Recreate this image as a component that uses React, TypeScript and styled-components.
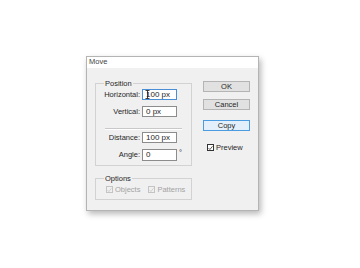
import React from 'react';
import styled, { createGlobalStyle } from 'styled-components';

const GlobalStyle = createGlobalStyle`
    html, body {
        margin: 0;
        padding: 0;
        background: #ffffff;
    }
    body {
        width: 360px;
        height: 268px;
        overflow: hidden;
        font-family: "Liberation Sans", Arial, sans-serif;
    }
`;

const Page = styled.div`
    width: 360px;
    height: 268px;
    box-sizing: border-box;
    padding: 56px 0 0 86px;
`;

const Dialog = styled.div`
    width: 173px;
    height: 155px;
    box-sizing: border-box;
    border: 1px solid #b4b4b4;
    background: #f0f0f0;
    box-shadow: 2px 3px 6px rgba(0, 0, 0, 0.28);
    display: flex;
    flex-direction: column;
    color: #262626;
    font-size: 7.5px;
`;

const TitleBar = styled.div`
    height: 11px;
    background: #ffffff;
    padding-left: 2px;
    font-size: 7.5px;
    line-height: 10px;
    color: #444;
`;

const Body = styled.div`
    flex: 1;
    display: flex;
    padding: 11px 0 0 8px;
`;

const LeftCol = styled.div`
    width: 97px;
    display: flex;
    flex-direction: column;
    gap: 8px;
`;

const Group = styled.fieldset<{ $h: number }>`
    margin: 0;
    padding: 0;
    height: ${(p) => p.$h}px;
    box-sizing: border-box;
    border: 1px solid #d2d2d2;
    min-width: 0;

    legend {
        margin-left: 8px;
        padding: 0 1px;
        font-size: 7.5px;
        line-height: 9px;
        color: #262626;
    }
`;

const Rows = styled.div`
    display: flex;
    flex-direction: column;
    padding-top: 1px;
`;

const Row = styled.div<{ $mt?: number }>`
    display: flex;
    align-items: center;
    height: 11px;
    margin-top: ${(p) => p.$mt ?? 0}px;
`;

const Label = styled.span`
    width: 44px;
    text-align: right;
    padding-right: 2px;
    line-height: 11px;
`;

const Field = styled.div<{ $focus?: boolean; $h?: number }>`
    position: relative;
    width: 35px;
    height: ${(p) => p.$h ?? 11}px;
    box-sizing: border-box;
    background: #ffffff;
    border: 1px solid ${(p) => (p.$focus ? '#4a8fd6' : '#8c8c8c')};
    padding-left: 3px;
    line-height: 9px;
    font-size: 8px;
    color: #262626;
`;

const Cursor = styled.svg`
    position: absolute;
    left: 2px;
    top: 0px;
`;

const Degree = styled.span`
    margin-left: 2px;
    align-self: flex-start;
    line-height: 8px;
`;

const Separator = styled.div`
    height: 0;
    margin: 11px 9px 2px 9px;
    border-top: 1px solid #c8c8c8;
    border-bottom: 1px solid #ffffff;
`;

const Options = styled.div`
    display: flex;
    align-items: center;
    padding: 2px 0 0 10px;
    gap: 8px;
`;

const CheckItem = styled.label<{ $disabled?: boolean }>`
    display: flex;
    align-items: center;
    gap: 2px;
    color: ${(p) => (p.$disabled ? '#a3a3a3' : '#262626')};
    font-size: 7.5px;
`;

const Box = styled.span<{ $disabled?: boolean }>`
    width: 7px;
    height: 7px;
    box-sizing: border-box;
    border: 1px solid ${(p) => (p.$disabled ? '#c4c4c4' : '#333')};
    background: ${(p) => (p.$disabled ? 'transparent' : '#fff')};
    display: flex;
    align-items: center;
    justify-content: center;
`;

const RightCol = styled.div`
    margin-left: 11px;
    display: flex;
    flex-direction: column;
    width: 47px;
`;

const Button = styled.div<{ $focus?: boolean; $mt: number }>`
    height: 11px;
    box-sizing: border-box;
    margin-top: ${(p) => p.$mt}px;
    border: 1px solid ${(p) => (p.$focus ? '#4a9be0' : '#b4b4b4')};
    background: ${(p) => (p.$focus ? '#e3f0fb' : '#e1e1e1')};
    text-align: center;
    line-height: 9px;
    font-size: 7.5px;
    color: #262626;
`;

const PreviewRow = styled.div`
    margin: 12px 0 0 4px;
`;

const Check = ({ disabled }: { disabled?: boolean }) => (
    <Box $disabled={disabled}>
        <svg width="6" height="6" viewBox="0 0 6 6">
            <path
                d="M0.6 3.1 L2.3 4.8 L5.4 0.9"
                fill="none"
                stroke={disabled ? '#c4c4c4' : '#222'}
                strokeWidth="0.9"
            />
        </svg>
    </Box>
);

const App = () => {
    return (
        <Page>
            <GlobalStyle />
            <Dialog>
                <TitleBar>Move</TitleBar>
                <Body>
                    <LeftCol>
                        <Group $h={87}>
                            <legend>Position</legend>
                            <Rows>
                                <Row>
                                    <Label>Horizontal:</Label>
                                    <Field $focus>
                                        100 px
                                        <Cursor width="5" height="9" viewBox="0 0 5 9">
                                            <path d="M0.5 0.5 H4.5 M2.5 0.5 V8.5 M0.5 8.5 H4.5" stroke="#111" strokeWidth="0.8" fill="none" />
                                        </Cursor>
                                    </Field>
                                </Row>
                                <Row $mt={6}>
                                    <Label>Vertical:</Label>
                                    <Field>0 px</Field>
                                </Row>
                                <Separator />
                                <Row>
                                    <Label>Distance:</Label>
                                    <Field>100 px</Field>
                                </Row>
                                <Row $mt={6}>
                                    <Label>Angle:</Label>
                                    <Field $h={12}>0</Field>
                                    <Degree>°</Degree>
                                </Row>
                            </Rows>
                        </Group>
                        <Group $h={26}>
                            <legend>Options</legend>
                            <Options>
                                <CheckItem $disabled>
                                    <Check disabled />
                                    Objects
                                </CheckItem>
                                <CheckItem $disabled>
                                    <Check disabled />
                                    Patterns
                                </CheckItem>
                            </Options>
                        </Group>
                    </LeftCol>
                    <RightCol>
                        <Button $mt={2}>OK</Button>
                        <Button $mt={7}>Cancel</Button>
                        <Button $mt={10} $focus>
                            Copy
                        </Button>
                        <PreviewRow>
                            <CheckItem>
                                <Check />
                                Preview
                            </CheckItem>
                        </PreviewRow>
                    </RightCol>
                </Body>
            </Dialog>
        </Page>
    );
};

export default App;
